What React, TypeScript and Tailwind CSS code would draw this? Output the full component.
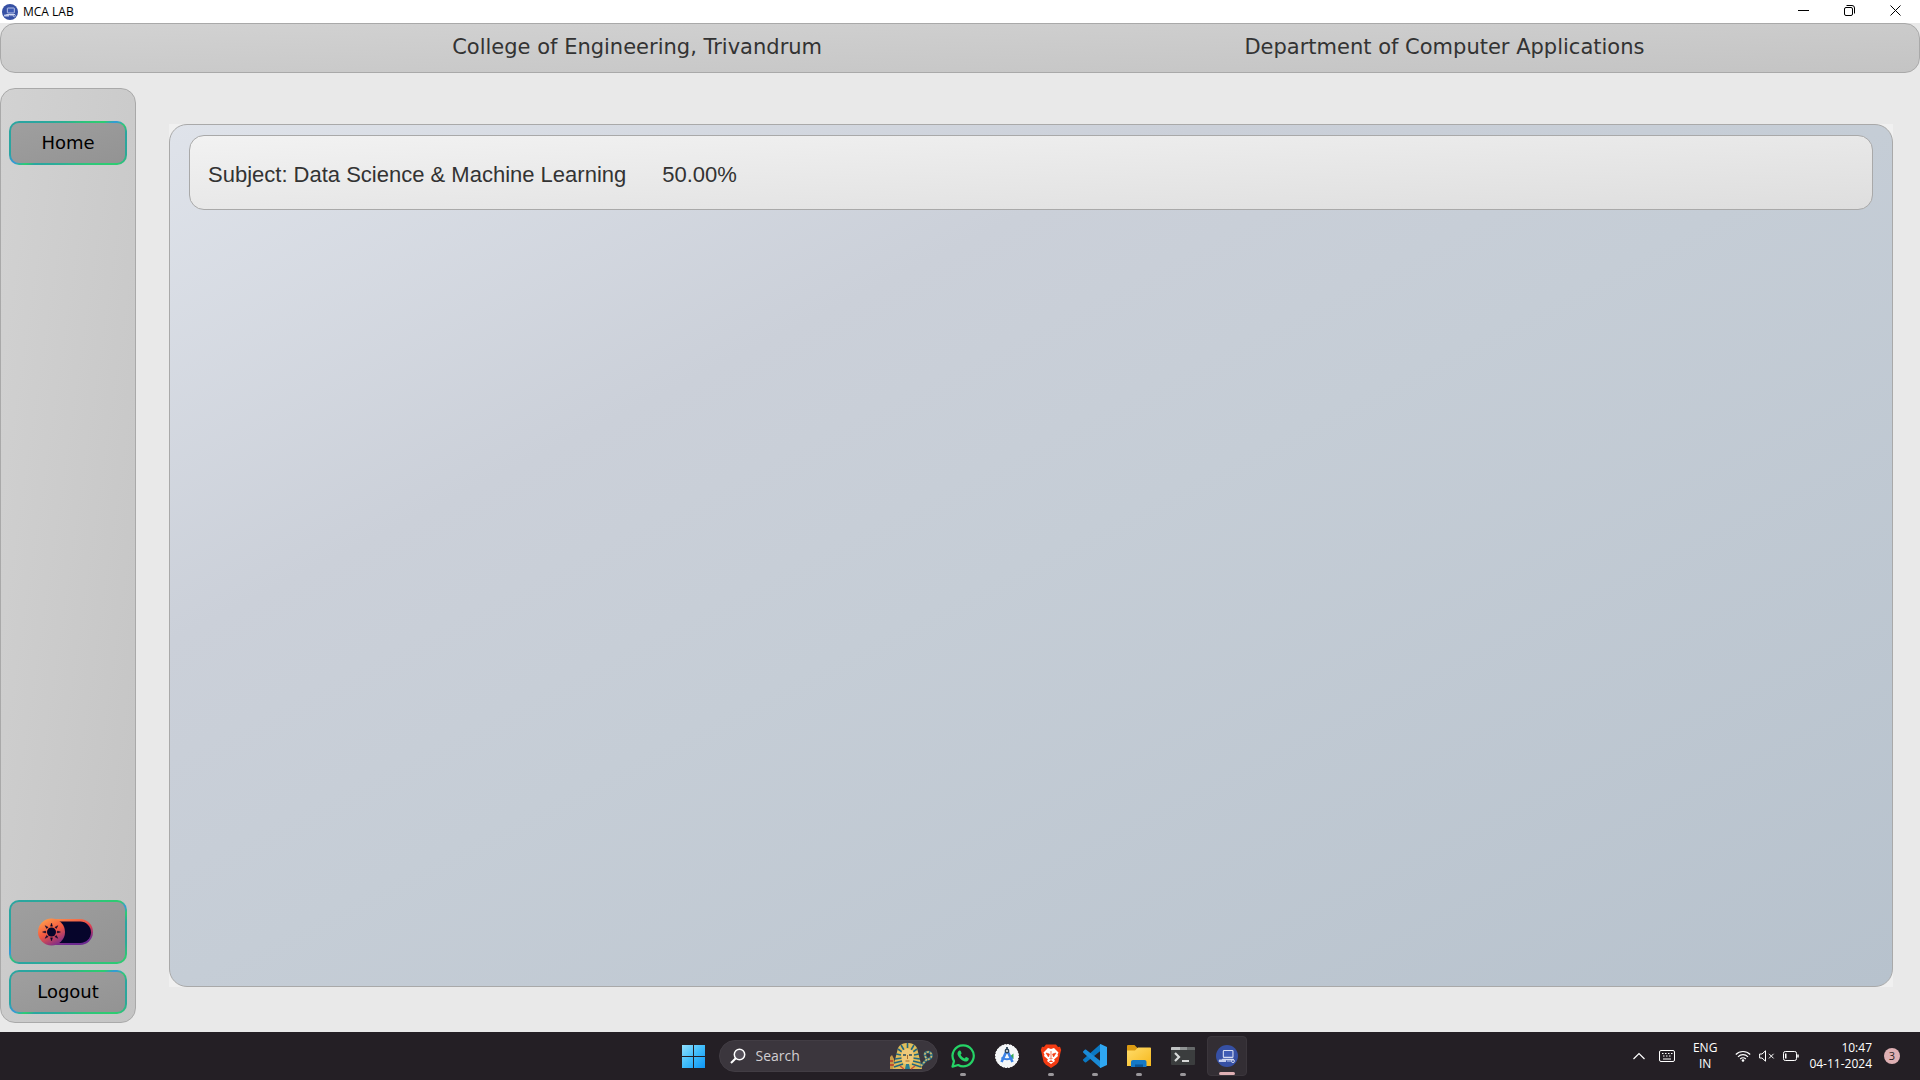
import React from "react";

type IconProps = { className?: string };

const buttonFrame =
  "rounded-[10px] border-2 border-transparent [background:linear-gradient(to_bottom_right,#9f9f9f,#939393)_padding-box,conic-gradient(#2cb28f_0deg,#2ecc71_60deg,#3498db_66deg,#2ecc71_72deg,#2ba5a0_80deg,#2ba898_100deg,#2ecc71_114deg,#2eb58f_180deg,#2ba5a0_238deg,#2ecc71_244deg,#3498db_250deg,#2ba5a0_260deg,#2ba5a0_300deg,#2cb28f_360deg)_border-box]";

function LabLogo({ className }: IconProps) {
  return (
    <svg viewBox="0 0 24 24" className={className} aria-hidden="true">
      <circle cx="12" cy="12" r="12" fill="#3650a4" />
      <rect x="8" y="6" width="10.500" height="7.500" rx="0.800" fill="#3f5cb5" stroke="#d5dcf2" strokeWidth="1.200" />
      <path d="M7 15h12l1 1.500H6z" fill="#d5dcf2" />
      <rect x="3" y="15.800" width="8" height="2.800" rx="1" fill="#c4cdec" />
      <path d="M12 17.500h5" stroke="#c4cdec" />
      <circle cx="18.500" cy="17.600" r="1.600" fill="none" stroke="#d5dcf2" />
    </svg>
  );
}

function ThemeSwitch() {
  return (
    <svg viewBox="0 0 56 28" className="h-7 w-14" aria-hidden="true">
      <defs>
        <linearGradient id="sun" x1="0.200" y1="0" x2="0.700" y2="1">
          <stop offset="0" stopColor="#ffa04d" />
          <stop offset="0.500" stopColor="#f4583f" />
          <stop offset="1" stopColor="#7a2a8c" />
        </linearGradient>
        <linearGradient id="track" x1="0" y1="0" x2="0.400" y2="1">
          <stop offset="0" stopColor="#ff9a4a" />
          <stop offset="0.500" stopColor="#e8434a" />
          <stop offset="1" stopColor="#6c2a90" />
        </linearGradient>
      </defs>
      <rect x="6" y="1" width="49" height="26" rx="13" fill="url(#track)" />
      <rect x="8" y="3.500" width="45" height="21.500" rx="10.750" fill="#06052b" />
      <circle cx="13.500" cy="14" r="13.500" fill="url(#sun)" />
      <circle cx="13.500" cy="14" r="4.500" fill="#06052b" />
      {[0, 45, 90, 135, 180, 225, 270, 315].map((a) => (
        <path key={a} d="M12.500 8.200L13.500 5l1 3.200z" fill="#06052b" stroke="#06052b" strokeWidth="0.400" transform={`rotate(${a} 13.500 14)`} />
      ))}
    </svg>
  );
}

function StartIcon() {
  return (
    <svg viewBox="0 0 23 23" className="size-[23px]" aria-hidden="true">
      <defs>
        <linearGradient id="win" gradientUnits="userSpaceOnUse" x1="0" y1="0" x2="23" y2="23">
          <stop offset="0" stopColor="#8fe0ff" />
          <stop offset="0.500" stopColor="#3fbcfb" />
          <stop offset="1" stopColor="#0d95f5" />
        </linearGradient>
      </defs>
      <path fill="url(#win)" d="M0 0h11v11H0zM12 0h11v11H12zM0 12h11v11H0zM12 12h11v11H12z" />
    </svg>
  );
}

function PharaohIcon() {
  return (
    <svg viewBox="0 0 44 28" className="h-7 w-11 shrink-0" aria-hidden="true">
      <path d="M1 27V15l2-2 2 4 2 10z" fill="#c99a45" />
      <path d="M1 19h3M1 23h4" stroke="#b5392d" strokeWidth="1.500" />
      <path d="M9 6C11 2 15 1 18.500 1S26 2 28 6l3 12 2 9H4l2-9z" fill="#e0bd5a" />
      <path d="M12 3l3 5M18.500 1v5M25 3l-3 5M9 7l4 3M28 7l-4 3M7 12l5 1M30 12l-5 1M6 17l7-1M31 17l-7-1M5 21l8-2M32 21l-8-2M5 25l9-3M32 25l-9-3" stroke="#23677f" strokeWidth="1.600" />
      <path d="M12.500 10c2-4 10-4 12 0v6c0 4-3 7-6 7s-6-3-6-7z" fill="#edc878" />
      <path d="M14 13h3M20 13h3" stroke="#274c5c" strokeWidth="1.500" />
      <path d="M18.500 13v4M16.500 19h4" stroke="#a86c2c" />
      <path d="M17 22h3l1 5h-5z" fill="#2a7f93" />
      <path d="M11 24l4 3M26 24l-4 3" stroke="#c8523a" strokeWidth="1.500" />
      <path d="M32 24l6-7c-3-3-3-7 1-7s5 5 1 7l-2 1" fill="none" stroke="#2d7486" strokeWidth="2.600" />
      <path d="M32 24l6-7c-3-3-3-7 1-7s5 5 1 7l-2 1" fill="none" stroke="#d9b869" strokeWidth="1.600" strokeDasharray="2 1.500" />
    </svg>
  );
}

function WhatsappIcon() {
  return (
    <svg viewBox="0 0 24 24" className="size-6" aria-hidden="true">
      <path d="M12.200 1.300a10.500 10.500 0 1 1-5 19.700L1.500 22.600 3 17.100A10.500 10.500 0 0 1 12.200 1.300z" fill="#241f25" stroke="#25d366" strokeWidth="2.200" strokeLinejoin="round" />
      <path d="M8.300 6.500c.6-.3 1.200 0 1.400.5l.8 2c.2.500-.6 1.300-.9 1.700.9 1.700 2.200 3 4 3.700.5-.4 1.200-1.500 1.700-1.300l2.100 1c.6.300.4 1.500 0 2.200-.8 1.200-2.500 1.600-4.200 1-3-1-5.300-3.300-6.500-6.200-.7-1.900.3-4 1.600-4.600z" fill="#25d366" />
    </svg>
  );
}

function StudioIcon() {
  return (
    <svg viewBox="0 0 24 24" className="size-6" aria-hidden="true">
      <circle cx="12" cy="12" r="11.500" fill="#f4f6f8" stroke="#fff" strokeDasharray="2 1" />
      <path d="M14 13l4.500-3.500V15z" fill="#34a853" />
      <path d="M12 6L6.500 18M12 6l5.500 12" stroke="#3b82e6" strokeWidth="2.600" />
      <path d="M6.500 13.500c3 2.400 8 2.400 11 0" fill="none" stroke="#3b82e6" strokeWidth="2" />
      <circle cx="12" cy="7" r="2.400" fill="#2d4558" />
      <circle cx="12" cy="7" r="0.900" fill="#fff" />
      <path d="M12 3v2" stroke="#2d4558" strokeWidth="1.800" />
    </svg>
  );
}

function BraveIcon() {
  return (
    <svg viewBox="0 0 24 24" className="size-6" aria-hidden="true">
      <path d="M7 .5h10L19 3l2-.2L22.200 6l-.6 2-2.200 10-2 2.500L12 24l-5.400-3.500-2-2.500L2.400 8l-.6-2L3 2.800 5 3z" fill="#f43b12" />
      <path d="M12 5l3-1 4.500 4.500-1 2 .5 1.500-4 3.500 1 1.500-4 3-4-3 1-1.500L5 12l.5-1.500-1-2L9 4z" fill="#fff" />
      <path d="M7 9l3.500 1-1 3zM17 9l-3.500 1 1 3zM10.500 14.500L12 15l1.500-.5M10 18l2-1.500 2 1.500" fill="#f43b12" stroke="#f43b12" strokeWidth="0.600" />
      <path d="M12 7v7" stroke="#f43b12" strokeWidth="0.700" />
    </svg>
  );
}

function CodeIcon() {
  return (
    <svg viewBox="0 0 24 24" className="size-6" aria-hidden="true">
      <path d="M17.500 0L18 6.500 3.200 18.200c-.5.400-1 .3-1.400 0L.3 16.700c-.4-.5-.4-1 0-1.400z" fill="#0b78c2" />
      <path d="M17.500 24L18 17.500 3.200 5.800c-.5-.4-1-.3-1.400 0L.3 7.300c-.4.500-.4 1 0 1.400z" fill="#1a8ad6" />
      <path d="M17.500 0L24 3v18l-6.500 3c-.6 0-.5-1-.5-1.500v-21c0-.5-.1-1.500.5-1.500z" fill="#2fa7f2" />
    </svg>
  );
}

function FolderIcon() {
  return (
    <svg viewBox="0 0 24 22" className="h-[22px] w-6" aria-hidden="true">
      <defs>
        <linearGradient id="folder" x1="0" y1="0" x2="1" y2="1">
          <stop offset="0" stopColor="#ffdc6b" />
          <stop offset="1" stopColor="#f7b81c" />
        </linearGradient>
      </defs>
      <path d="M0 1.200C0 .5.500 0 1.200 0h6.300l3 3H23v6H0z" fill="#dc9b12" />
      <path d="M0 5.500h8L11 2.500h12c.6 0 1 .4 1 1V21H0z" fill="url(#folder)" />
      <path d="M4 22v-5c0-1.200.8-2 2-2h11.500c1.200 0 2 .8 2 2v5z" fill="#1579c6" />
      <path d="M8 22v-2.500h8V22z" fill="#0a5596" />
    </svg>
  );
}

function TerminalIcon() {
  return (
    <svg viewBox="0 0 24 18" className="h-[18px] w-6" aria-hidden="true">
      <rect width="24" height="18" rx="1" fill="#3b3d3e" />
      <path d="M0 1a1 1 0 0 1 1-1h8v3H0z" fill="#c0c2c3" />
      <path d="M9 0h7v3H9z" fill="#8f9293" />
      <path d="M16 0h7a1 1 0 0 1 1 1v2h-8z" fill="#66696a" />
      <path d="M4 6l4 4-4 4" fill="none" stroke="#d8dada" strokeWidth="2.200" />
      <path d="M11 14h7" stroke="#fff" strokeWidth="1.600" />
    </svg>
  );
}

const apps: { name: string; icon: React.ReactNode; running: boolean; active?: boolean }[] = [
  { name: "WhatsApp", icon: <WhatsappIcon />, running: true },
  { name: "Android Studio", icon: <StudioIcon />, running: false },
  { name: "Brave", icon: <BraveIcon />, running: true },
  { name: "Visual Studio Code", icon: <CodeIcon />, running: true },
  { name: "File Explorer", icon: <FolderIcon />, running: true },
  { name: "Terminal", icon: <TerminalIcon />, running: true },
  { name: "MCA LAB", icon: <LabLogo className="size-[22px]" />, running: true, active: true },
];

function TitleBar() {
  return (
    <div className="flex h-[23px] items-center justify-between bg-white pr-0.5 pl-0.5 text-black">
      <div className="flex items-center gap-[5px]">
        <LabLogo className="size-4" />
        <span className="font-['Open_Sans',sans-serif] text-xs">MCA LAB</span>
      </div>
      <div className="flex h-full items-center pb-0.5">
        <button aria-label="Minimize" className="flex w-[46px] justify-center">
          <svg viewBox="0 0 11 11" className="size-[11px]"><path d="M0 5.500h11" stroke="#000" /></svg>
        </button>
        <button aria-label="Restore" className="flex w-[46px] justify-center">
          <svg viewBox="0 0 11 11" className="size-[11px]" fill="none" stroke="#000">
            <rect x="0.500" y="2.500" width="8" height="8" rx="1.500" />
            <path d="M2.500.5H8A2.500 2.500 0 0 1 10.500 3v5.500" />
          </svg>
        </button>
        <button aria-label="Close" className="flex w-[46px] justify-center">
          <svg viewBox="0 0 11 11" className="size-[11px]"><path d="M.5.5l10 10M10.500.5l-10 10" stroke="#000" /></svg>
        </button>
      </div>
    </div>
  );
}

function Taskbar() {
  return (
    <footer className="grid h-12 grid-cols-[1fr_auto_1fr] items-center bg-[#241f25] font-['Open_Sans',sans-serif] text-white">
      <div />
      <div className="flex items-center gap-[3px]">
        <button aria-label="Start" className="flex h-10 w-11 items-center justify-center"><StartIcon /></button>
        <label className="flex h-8 w-[219px] items-center rounded-full border border-[#423d44] bg-[#3b363d] pr-1 pl-2.5">
          <svg viewBox="0 0 16 16" className="mr-2.5 size-4 shrink-0" fill="none" stroke="#fff" strokeWidth="1.500">
            <circle cx="9.500" cy="6.500" r="5.200" fill="#55505a" />
            <path d="M5.800 10.200L1 15" strokeWidth="2" />
          </svg>
          <input aria-label="Search" placeholder="Search" className="w-full min-w-0 bg-transparent text-sm outline-none placeholder:text-[#d2cfd3]" />
          <PharaohIcon />
        </label>
        <div className="flex">
          {apps.map((app) => (
            <button key={app.name} aria-label={app.name} className="flex w-11 justify-center">
              <span className={app.active ? "relative flex size-10 items-center justify-center rounded border border-[#3b363c] bg-[#332e34]" : "relative flex size-10 items-center justify-center"}>
                {app.icon}
                {app.running && (
                  <span className={app.active ? "absolute bottom-0 h-[3px] w-4 rounded-full bg-[#dfb0b4]" : "absolute bottom-0 h-[3px] w-1.5 rounded-full bg-[#9a979b]"} />
                )}
              </span>
            </button>
          ))}
        </div>
      </div>
      <div className="flex items-center justify-end pr-5">
        <button aria-label="Show hidden icons" className="mr-3.5">
          <svg viewBox="0 0 12 8" className="h-2 w-3" fill="none" stroke="#fff" strokeWidth="1.200"><path d="M.5 7L6 1.500 11.500 7" /></svg>
        </button>
        <button aria-label="Touch keyboard" className="mr-[18px]">
          <svg viewBox="0 0 16 12" className="h-3 w-4" fill="none" stroke="#fff">
            <rect x="0.500" y="0.500" width="15" height="11" rx="1.500" />
            <path d="M3 3.500h1.500M6 3.500h1.500M9 3.500h1.500M12 3.500h1.500M4 6h1.500M7 6h1.500M10 6h1.500M4 9h8" />
          </svg>
        </button>
        <button className="mr-[18px] text-center text-xs leading-4">ENG<br />IN</button>
        <button aria-label="Network, sound and battery" className="mr-2.5 flex items-center gap-2">
          <svg viewBox="0 0 16 12" className="h-3 w-4" fill="none" stroke="#fff" strokeWidth="1.200">
            <path d="M.8 4.500a10.200 10.200 0 0 1 14.400 0M3 6.800a7 7 0 0 1 10 0M5.200 9a4 4 0 0 1 5.600 0" />
            <circle cx="8" cy="10.500" r="1.300" fill="#fff" stroke="none" />
          </svg>
          <svg viewBox="0 0 16 12" className="h-3 w-4" fill="none" stroke="#fff">
            <path d="M.6 4h2.400l3.500-3.200v10.400L3 8H.6zM10 3.800l4.600 4.600M14.600 3.800L10 8.400" />
          </svg>
          <svg viewBox="0 0 16 10" className="h-2.5 w-4" fill="none" stroke="#fff">
            <rect x="0.500" y="0.500" width="13" height="9" rx="1.800" />
            <path d="M15 3.500v3" strokeWidth="1.500" />
            <path d="M2 2.500h1.500v5H2z" fill="#fff" stroke="none" />
          </svg>
        </button>
        <button className="mr-3 text-right text-xs leading-4">10:47<br />04-11-2024</button>
        <button aria-label="3 notifications" className="flex size-4 items-center justify-center rounded-full bg-[#dfb0b4] text-[11px] leading-4 text-[#2a1c20]">3</button>
      </div>
    </footer>
  );
}

export default function App() {
  return (
    <div className="flex min-h-screen flex-col bg-[#e9e9e9]">
      <TitleBar />
      <header className="flex h-[50px] items-center justify-between rounded-[15px] border border-[#a9a9a9] bg-linear-to-br from-[#d2d2d2] to-[#c4c4c4] pr-[14.3%] pl-[23.5%] font-['DejaVu_Sans',sans-serif] text-[21px] text-[#333]">
        <h1>College of Engineering, Trivandrum</h1>
        <h2>Department of Computer Applications</h2>
      </header>
      <div className="flex grow pt-[15px] pb-[9px]">
        <nav className="flex w-[136px] shrink-0 flex-col rounded-[15px] border border-[#a9a9a9] px-2 pt-8 pb-2 font-['DejaVu_Sans',sans-serif] text-lg text-black [background:linear-gradient(to_bottom_right,#d2d2d2,#c4c4c4)]">
          <button className={`${buttonFrame} h-11 leading-5`}>Home</button>
          <button role="switch" aria-checked="false" aria-label="Dark theme" className={`${buttonFrame} mt-auto flex h-16 items-center justify-center pr-1`}>
            <ThemeSwitch />
          </button>
          <button className={`${buttonFrame} mt-1.5 h-11 leading-5`}>Logout</button>
        </nav>
        <main className="mt-9 mr-[27px] mb-9 ml-[33px] grow bg-[#f0f0f0]">
          <div className="h-full rounded-[18px] border border-[#a9a9a9] px-[19px] py-2.5 [background:linear-gradient(to_bottom_right,#dfe3ea,#cbd0d9_30%,#c5cdd6_50%,#b7c2cd)]">
            <section className="flex h-[75px] items-center gap-9 rounded-[15px] border border-[#a9a9a9] px-[18px] pt-1 font-['Liberation_Sans',sans-serif] text-[22px] text-[#333] [background:linear-gradient(to_bottom_right,#f2f2f2,#dedede)]">
              <span>Subject: Data Science &amp; Machine Learning</span>
              <span>50.00%</span>
            </section>
          </div>
        </main>
      </div>
      <Taskbar />
    </div>
  );
}
